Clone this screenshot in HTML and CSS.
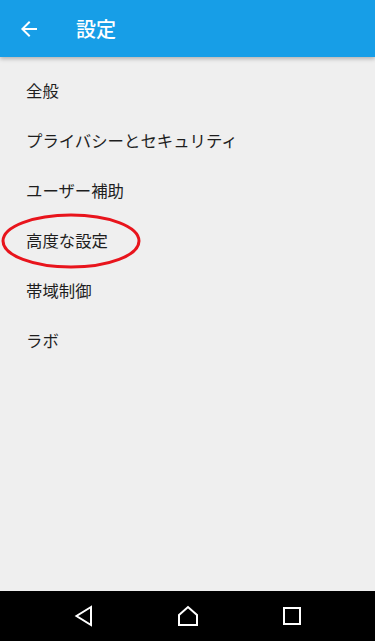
FILE: index.html
```html
<!DOCTYPE html>
<html lang="ja">
<head>
<meta charset="utf-8">
<link rel="stylesheet" href="styles.css">
</head>
<body>
<div class="screen">
  <header class="appbar">
    <svg class="back" viewBox="0 0 24 24" width="24" height="24"><path d="M20 11H7.83l5.59-5.59L12 4l-8 8 8 8 1.41-1.41L7.83 13H20v-2z" fill="#fff"/></svg>
    <h1 class="title">設定</h1>
  </header>
  <ul class="list">
    <li class="item">全般</li>
    <li class="item">プライバシーとセキュリティ</li>
    <li class="item">ユーザー補助</li>
    <li class="item marked">高度な設定
      <svg class="circle" viewBox="0 0 140 58" width="140" height="58"><ellipse cx="70" cy="29" rx="68" ry="26" fill="none" stroke="#e8141c" stroke-width="3"/></svg>
    </li>
    <li class="item">帯域制御</li>
    <li class="item">ラボ</li>
  </ul>
  <nav class="navbar">
    <svg viewBox="0 0 20 22" width="20" height="22"><path d="M17 2 L2.5 11 L17 20 Z" fill="none" stroke="#fff" stroke-width="2" stroke-linejoin="miter"/></svg>
    <svg viewBox="0 0 22 22" width="22" height="22"><path d="M2 10 L11 2 L20 10 V20 H2 Z" fill="none" stroke="#fff" stroke-width="2"/></svg>
    <svg viewBox="0 0 20 20" width="20" height="20"><rect x="2" y="2" width="16" height="16" fill="none" stroke="#fff" stroke-width="2"/></svg>
  </nav>
</div>
</body>
</html>
```
FILE: styles.css
```css
* { box-sizing: border-box; }
html, body { margin: 0; padding: 0; }
body {
  font-family: "Noto Sans CJK JP", "Noto Sans", Roboto, sans-serif;
  background: #efefef;
}
.screen {
  width: 375px;
  height: 641px;
  display: flex;
  flex-direction: column;
  background: #efefef;
}
.appbar {
  height: 57px;
  flex: none;
  background: #179ee7;
  display: flex;
  align-items: center;
  padding-left: 17px;
  box-shadow: 0 2px 4px rgba(0,0,0,0.25);
  position: relative;
  z-index: 1;
}
.back { flex: none; }
.title {
  margin: 0 0 0 35px;
  color: #fff;
  font-size: 20px;
  font-weight: 500;
  line-height: 1;
}
.list {
  list-style: none;
  margin: 0;
  padding: 8px 0 0 0;
  flex: 1;
}
.item {
  height: 50px;
  display: flex;
  align-items: center;
  padding-left: 26px;
  font-size: 16.4px;
  color: #1e1e1e;
}
.marked { position: relative; }
.circle {
  position: absolute;
  left: 1px;
  top: -3px;
}
.navbar {
  height: 50px;
  flex: none;
  background: #000;
  display: flex;
  align-items: center;
  justify-content: space-between;
  padding: 0 73px 0 74px;
}
```
